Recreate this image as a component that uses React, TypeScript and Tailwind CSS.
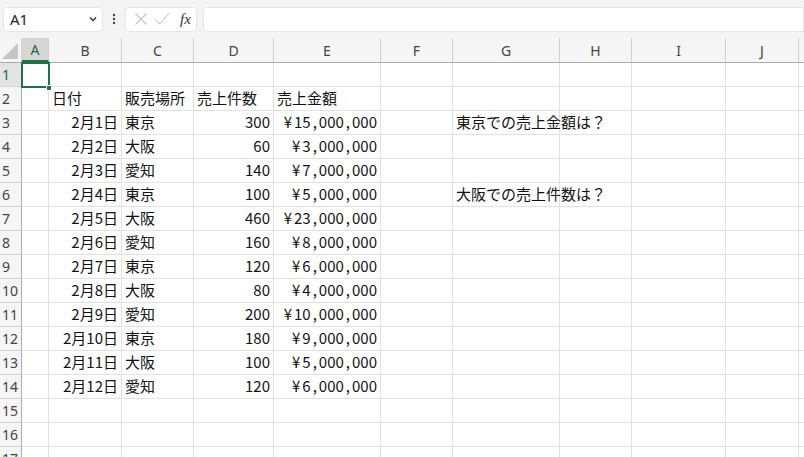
import React from "react";

const cols = [
  { l: "A", w: 27 },
  { l: "B", w: 73 },
  { l: "C", w: 72 },
  { l: "D", w: 80 },
  { l: "E", w: 107 },
  { l: "F", w: 72 },
  { l: "G", w: 107 },
  { l: "H", w: 72 },
  { l: "I", w: 94 },
  { l: "J", w: 73 },
  { l: "K", w: 60 },
];

type Cell = { t: string; r?: boolean };
const data: Record<number, Record<number, Cell>> = {
  2: { 1: { t: "日付" }, 2: { t: "販売場所" }, 3: { t: "売上件数" }, 4: { t: "売上金額" } },
};
const rowsData: [string, string, string, string][] = [
  ["2月1日", "東京", "300", "¥15,000,000"],
  ["2月2日", "大阪", "60", "¥3,000,000"],
  ["2月3日", "愛知", "140", "¥7,000,000"],
  ["2月4日", "東京", "100", "¥5,000,000"],
  ["2月5日", "大阪", "460", "¥23,000,000"],
  ["2月6日", "愛知", "160", "¥8,000,000"],
  ["2月7日", "東京", "120", "¥6,000,000"],
  ["2月8日", "大阪", "80", "¥4,000,000"],
  ["2月9日", "愛知", "200", "¥10,000,000"],
  ["2月10日", "東京", "180", "¥9,000,000"],
  ["2月11日", "大阪", "100", "¥5,000,000"],
  ["2月12日", "愛知", "120", "¥6,000,000"],
];
rowsData.forEach((r, i) => {
  data[i + 3] = {
    1: { t: r[0], r: true },
    2: { t: r[1] },
    3: { t: r[2], r: true },
    4: { t: r[3], r: true },
  };
});
data[3][6] = { t: "東京での売上金額は？" };
data[6][6] = { t: "大阪での売上件数は？" };

const font = { fontFamily: '"Noto Sans CJK JP", "Noto Sans", sans-serif' };

function Money({ t }: { t: string }) {
  const parts = t.split("");
  return (
    <span>
      {parts.map((ch, i) =>
        ch === "," ? (
          <span key={i} className="mx-[2px]">,</span>
        ) : ch === "¥" ? (
          <span key={i} className="mr-[2px]">¥</span>
        ) : (
          <React.Fragment key={i}>{ch}</React.Fragment>
        )
      )}
    </span>
  );
}

export default function App() {
  const rows = Array.from({ length: 17 }, (_, i) => i + 1);
  return (
    <div className="w-[804px] h-[457px] overflow-hidden bg-white relative" style={font}>
      {/* toolbar */}
      <div className="h-[38px] bg-[#f3f3f3] flex items-center gap-0 pl-[3px]">
        <div className="w-[100px] h-[25px] shrink-0 bg-white rounded-[4px] border border-[#e6e6e6] flex items-center justify-between pl-[6px] pr-[4px]">
          <span className="text-[15px] text-[#222]" style={{ fontFamily: '"Noto Sans", sans-serif' }}>A1</span>
          <svg width="10" height="10" viewBox="0 0 10 10">
            <path d="M2 3.5 L5 6.5 L8 3.5" fill="none" stroke="#333" strokeWidth="1.4" />
          </svg>
        </div>
        <div className="w-[22px] shrink-0 flex justify-center">
          <svg width="4" height="12" viewBox="0 0 4 12">
            <circle cx="2" cy="2" r="1.2" fill="#444" />
            <circle cx="2" cy="6" r="1.2" fill="#444" />
            <circle cx="2" cy="10" r="1.2" fill="#444" />
          </svg>
        </div>
        <div className="w-[72px] h-[25px] shrink-0 bg-white rounded-[4px] border border-[#e6e6e6] flex items-center pl-[8px] gap-[6px]">
          <svg width="14" height="14" viewBox="0 0 14 14">
            <path d="M1.5 1.5 L12.5 12.5 M12.5 1.5 L1.5 12.5" stroke="#c4c4c4" strokeWidth="1.1" />
          </svg>
          <svg width="16" height="14" viewBox="0 0 16 14">
            <path d="M1 7 L5.5 12 L15 1.5" fill="none" stroke="#c4c4c4" strokeWidth="1.1" />
          </svg>
          <span className="text-[15px] italic text-[#333] ml-[4px] leading-none" style={{ fontFamily: '"Liberation Serif", serif' }}>
            fx
          </span>
        </div>
        <div className="ml-[6px] flex-1 h-[25px] bg-white rounded-l-[4px] border border-[#e6e6e6]" />
      </div>

      {/* column header */}
      <div className="flex h-[25px] bg-[#f5f5f5] border-b border-[#ababab]">
        <div className="w-[22px] shrink-0 h-full border-r border-[#d0d0d0] relative">
          <svg className="absolute right-[3px] bottom-[3px]" width="16" height="16" viewBox="0 0 16 16">
            <path d="M16 0 L16 16 L0 16 Z" fill="#c6c6c6" />
          </svg>
        </div>
        {cols.map((c, i) => (
          <div
            key={c.l}
            style={{ width: c.w }}
            className={`h-full shrink-0 border-r border-[#d0d0d0] flex items-center justify-center text-[14px] ${
              i === 0 ? "bg-[#d6d6d6] text-[#1e6b42] border-b-2 border-b-[#1e7145]" : "text-[#444]"
            }`}
          >
            <span style={{ fontFamily: '"Noto Sans", sans-serif' }}>{c.l}</span>
          </div>
        ))}
      </div>

      {/* rows */}
      {rows.map((r) => (
        <div key={r} className="flex h-[24px]">
          <div
            className={`w-[22px] shrink-0 h-full border-r border-[#ababab] border-b border-b-[#d4d4d4] flex items-center pl-[2px] text-[14px] ${
              r === 1 ? "bg-[#e3e3e3] text-[#1e6b42]" : "bg-[#f5f5f5] text-[#444]"
            }`}
            style={{ fontFamily: '"Noto Sans", sans-serif' }}
          >
            {r}
          </div>
          {cols.map((c, ci) => {
            const cell = data[r]?.[ci];
            return (
              <div
                key={c.l}
                style={{ width: c.w }}
                className={`h-full shrink-0 border-r border-b border-[#e1e1e1] flex items-center whitespace-nowrap overflow-visible text-[15px] text-[#111] px-[3px] ${
                  cell?.r ? "justify-end" : "justify-start"
                }`}
              >
                {cell ? (ci === 4 && cell.t.startsWith("¥") ? <Money t={cell.t} /> : <span>{cell.t}</span>) : null}
              </div>
            );
          })}
        </div>
      ))}

      {/* selection */}
      <div className="absolute left-[21px] top-[62px] w-[29px] h-[26px] border-2 border-[#1e7145] pointer-events-none" />
      <div className="absolute left-[46px] top-[85px] w-[6px] h-[6px] bg-[#1e7145] border border-white" />
    </div>
  );
}
